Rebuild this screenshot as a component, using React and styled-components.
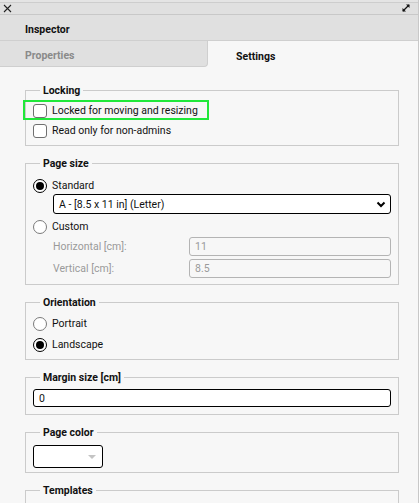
import React from 'react';
import styled, { createGlobalStyle } from 'styled-components';

const GlobalStyle = createGlobalStyle`
  html, body { margin: 0; padding: 0; background: #f7f7f7; }
  body { font-family: Roboto, "Liberation Sans", sans-serif; font-size: 10.5px; color: #111; }
  * { box-sizing: border-box; }
`;

const Panel = styled.div`
  width: 419px;
  height: 503px;
  overflow: hidden;
  background: #f7f7f7;
  border-right: 1px solid #c8c8c8;
  display: flex;
  flex-direction: column;
  & > * { flex: none; }
`;

const TitleBar = styled.div`
  height: 15px;
  background: linear-gradient(#e4e4e4 0 2px, #cdcdcd 2px 3px, #e0e0e0 3px);
  border-bottom: 1px solid #c8c8c8;
  display: flex;
  align-items: flex-end;
  justify-content: space-between;
  padding: 0 7px 1px 3px;
`;

const Header = styled.div`
  height: 26px;
  background: #e0e0e0;
  border-bottom: 1px solid #cfcfcf;
  display: flex;
  align-items: center;
  padding: 4px 0 0 25px;
  font-weight: bold;
  font-size: 10.5px;
`;

const Tabs = styled.div`
  display: flex;
  height: 26px;
  background: #f7f7f7;
`;

const Tab = styled.div`
  flex: 1;
  display: flex;
  align-items: center;
  padding: 4px 0 0 ${p => (p.$active ? 26 : 25)}px;
  font-weight: bold;
  font-size: 10.5px;
  color: ${p => (p.$active ? '#111' : '#8a8a8a')};
  background: ${p => (p.$active ? '#f7f7f7' : '#e0e0e0')};
  border-radius: ${p => (p.$active ? '4px 0 0 0' : '0 0 4px 0')};
  border-bottom: ${p => (p.$active ? 'none' : '1px solid #cfcfcf')};
  border-right: ${p => (p.$active ? 'none' : '1px solid #cfcfcf')};
  margin-right: ${p => (p.$active ? 0 : '2px')};
`;

const Body = styled.div`
  padding: 17px 19px 0 25px;
  display: flex;
  flex-direction: column;
  gap: 11px;
`;

const Fieldset = styled.fieldset`
  margin: 0;
  border: 1px solid #cbcbcb;
  padding: 4px 7px ${p => p.$pb ?? 3}px 7px;
  display: flex;
  flex-direction: column;
  min-width: 0;
`;

const Legend = styled.legend`
  font-weight: bold;
  font-size: 10.5px;
  line-height: 13px;
  padding: 0 3px;
  margin-left: 7px;
`;

const Row = styled.label`
  display: flex;
  align-items: center;
  gap: 5px;
  height: ${p => p.$h || 21}px;
  margin-top: ${p => p.$mt || 0}px;
  font-size: 10.5px;
  position: relative;
`;

const Highlight = styled.span`
  position: absolute;
  left: -10px;
  top: -1px;
  width: 186px;
  height: 20px;
  border: 2.5px solid #20e83a;
  pointer-events: none;
`;

const Check = styled.span`
  width: 14px;
  height: 14px;
  border: 1px solid #6f6f6f;
  border-radius: 3px;
  background: #fff;
  flex: none;
`;

const Radio = styled.span`
  width: 14px;
  height: 14px;
  border-radius: 50%;
  border: 1px solid ${p => (p.$on ? '#000' : '#7a7a7a')};
  background: #fff;
  flex: none;
  display: flex;
  align-items: center;
  justify-content: center;
  &::after {
    content: '';
    display: ${p => (p.$on ? 'block' : 'none')};
    width: 8px;
    height: 8px;
    border-radius: 50%;
    background: #000;
  }
`;

const Select = styled.div`
  margin-left: 20px;
  height: 20px;
  border: 1px solid #000;
  border-radius: 3px;
  background: #fff;
  display: flex;
  align-items: center;
  justify-content: space-between;
  padding: 0 4px 0 5px;
  font-size: 10.5px;
`;

const SubGrid = styled.div`
  margin-left: 20px;
  display: grid;
  grid-template-columns: 136px 1fr;
  row-gap: 3px;
  align-items: center;
`;

const SubLabel = styled.span`
  color: #9a9a9a;
  font-size: 10.5px;
`;

const Input = styled.div`
  height: ${p => p.$h || 19}px;
  margin-top: ${p => p.$mt || 0}px;
  border: 1px solid ${p => (p.$disabled ? '#b4b4b4' : '#000')};
  border-radius: 3px;
  background: ${p => (p.$disabled ? '#f7f7f7' : '#fff')};
  color: ${p => (p.$disabled ? '#9a9a9a' : '#111')};
  display: flex;
  align-items: center;
  padding: 0 5px;
  font-size: 10.5px;
`;

const ColorButton = styled.div`
  width: 70px;
  height: 23px;
  border: 1px solid #000;
  border-radius: 3px;
  background: #fff;
  display: flex;
  align-items: center;
  justify-content: flex-end;
  padding-right: 6px;
  margin: 2px 0 0;
  &::after {
    content: '';
    border-left: 4px solid transparent;
    border-right: 4px solid transparent;
    border-top: 4px solid #c4c4c4;
  }
`;

const Chevron = () => (
  <svg width="10" height="7" viewBox="0 0 10 7">
    <path d="M1.5 1.5 L5 5 L8.5 1.5" fill="none" stroke="#000" strokeWidth="2" />
  </svg>
);

const ExpandIcon = () => (
  <svg width="10" height="10" viewBox="0 0 10 10">
    <path d="M2 8 L8 2" stroke="#111" strokeWidth="1.3" />
    <path d="M5 1.5 H8.5 V5 Z" fill="#111" />
    <path d="M1.5 5 V8.5 H5 Z" fill="#111" />
  </svg>
);

const CloseIcon = () => (
  <svg width="9" height="9" viewBox="0 0 9 9">
    <path d="M1 1 L8 8 M8 1 L1 8" stroke="#222" strokeWidth="1.1" />
  </svg>
);

export default function App() {
  return (
    <>
      <GlobalStyle />
      <Panel>
        <TitleBar>
          <CloseIcon />
          <ExpandIcon />
        </TitleBar>
        <Header>Inspector</Header>
        <Tabs>
          <Tab>Properties</Tab>
          <Tab $active>Settings</Tab>
        </Tabs>
        <Body>
          <Fieldset $pb={4}>
            <Legend>Locking</Legend>
            <Row $h={19}>
              <Highlight />
              <Check />
              Locked for moving and resizing
            </Row>
            <Row $h={21}>
              <Check />
              Read only for non-admins
            </Row>
          </Fieldset>

          <Fieldset $pb={6}>
            <Legend>Page size</Legend>
            <Row $h={17} $mt={3}>
              <Radio $on />
              Standard
            </Row>
            <Select>
              A - [8.5 x 11 in] (Letter)
              <Chevron />
            </Select>
            <Row $h={21} $mt={2}>
              <Radio />
              Custom
            </Row>
            <SubGrid>
              <SubLabel>Horizontal [cm]:</SubLabel>
              <Input $disabled>11</Input>
              <SubLabel>Vertical [cm]:</SubLabel>
              <Input $disabled>8.5</Input>
            </SubGrid>
          </Fieldset>

          <Fieldset $pb={4}>
            <Legend>Orientation</Legend>
            <Row $h={21}>
              <Radio />
              Portrait
            </Row>
            <Row $h={21}>
              <Radio $on />
              Landscape
            </Row>
          </Fieldset>

          <Fieldset $pb={7}>
            <Legend>Margin size [cm]</Legend>
            <Input $h={18} $mt={1}>0</Input>
          </Fieldset>

          <Fieldset $pb={4}>
            <Legend>Page color</Legend>
            <ColorButton />
          </Fieldset>

          <Fieldset>
            <Legend>Templates</Legend>
            <Row $h={40} />
          </Fieldset>
        </Body>
      </Panel>
    </>
  );
}
